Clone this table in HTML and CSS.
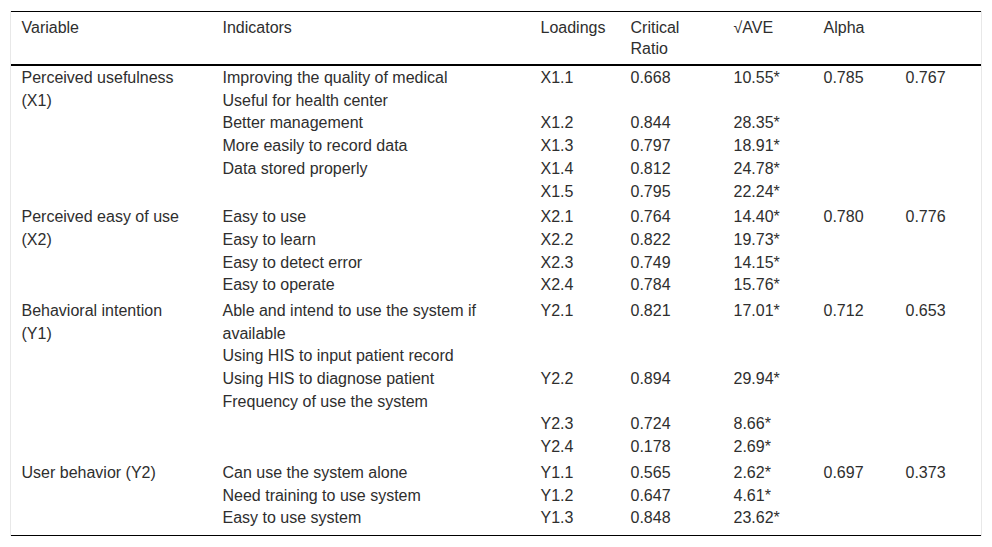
FILE: index.html
```html
<!DOCTYPE html>
<html lang="en">
<head>
<meta charset="utf-8">
<title>Table</title>
<link rel="stylesheet" href="styles.css">
</head>
<body>
<div class="wrap">
<table class="tbl">
  <colgroup>
    <col class="c1"><col class="c2"><col class="c3"><col class="c4"><col class="c5"><col class="c6"><col class="c7">
  </colgroup>
  <thead>
    <tr>
      <th>Variable</th>
      <th>Indicators</th>
      <th>Loadings</th>
      <th>Critical Ratio</th>
      <th>√AVE</th>
      <th>Alpha</th>
      <th></th>
    </tr>
  </thead>
  <tbody>
    <tr>
      <td class="var">Perceived usefulness (X1)</td>
      <td><div class="ln">Improving the quality of medical</div><div class="ln">Useful for health center</div><div class="ln">Better management</div><div class="ln">More easily to record data</div><div class="ln">Data stored properly</div></td>
      <td><div class="ln">X1.1</div><div class="ln"></div><div class="ln">X1.2</div><div class="ln">X1.3</div><div class="ln">X1.4</div><div class="ln">X1.5</div></td>
      <td><div class="ln">0.668</div><div class="ln"></div><div class="ln">0.844</div><div class="ln">0.797</div><div class="ln">0.812</div><div class="ln">0.795</div></td>
      <td><div class="ln">10.55*</div><div class="ln"></div><div class="ln">28.35*</div><div class="ln">18.91*</div><div class="ln">24.78*</div><div class="ln">22.24*</div></td>
      <td>0.785</td>
      <td>0.767</td>
    </tr>
    <tr>
      <td class="var">Perceived easy of use (X2)</td>
      <td><div class="ln">Easy to use</div><div class="ln">Easy to learn</div><div class="ln">Easy to detect error</div><div class="ln">Easy to operate</div></td>
      <td><div class="ln">X2.1</div><div class="ln">X2.2</div><div class="ln">X2.3</div><div class="ln">X2.4</div></td>
      <td><div class="ln">0.764</div><div class="ln">0.822</div><div class="ln">0.749</div><div class="ln">0.784</div></td>
      <td><div class="ln">14.40*</div><div class="ln">19.73*</div><div class="ln">14.15*</div><div class="ln">15.76*</div></td>
      <td>0.780</td>
      <td>0.776</td>
    </tr>
    <tr>
      <td class="var">Behavioral intention (Y1)</td>
      <td><div class="ln">Able and intend to use the system if available</div><div class="ln">Using HIS to input patient record</div><div class="ln">Using HIS to diagnose patient</div><div class="ln">Frequency of use the system</div></td>
      <td><div class="ln">Y2.1</div><div class="ln"></div><div class="ln"></div><div class="ln">Y2.2</div><div class="ln"></div><div class="ln">Y2.3</div><div class="ln">Y2.4</div></td>
      <td><div class="ln">0.821</div><div class="ln"></div><div class="ln"></div><div class="ln">0.894</div><div class="ln"></div><div class="ln">0.724</div><div class="ln">0.178</div></td>
      <td><div class="ln">17.01*</div><div class="ln"></div><div class="ln"></div><div class="ln">29.94*</div><div class="ln"></div><div class="ln">8.66*</div><div class="ln">2.69*</div></td>
      <td>0.712</td>
      <td>0.653</td>
    </tr>
    <tr class="last">
      <td class="var">User behavior (Y2)</td>
      <td><div class="ln">Can use the system alone</div><div class="ln">Need training to use system</div><div class="ln">Easy to use system</div></td>
      <td><div class="ln">Y1.1</div><div class="ln">Y1.2</div><div class="ln">Y1.3</div></td>
      <td><div class="ln">0.565</div><div class="ln">0.647</div><div class="ln">0.848</div></td>
      <td><div class="ln">2.62*</div><div class="ln">4.61*</div><div class="ln">23.62*</div></td>
      <td>0.697</td>
      <td>0.373</td>
    </tr>
  </tbody>
</table>
</div>
</body>
</html>
```
FILE: styles.css
```css
html, body {
  margin: 0;
  padding: 0;
  background: #fff;
}
body {
  padding: 11px 10px 0 10px;
  font-family: "Liberation Sans", Arial, sans-serif;
  color: #2e2e2e;
}
.wrap {
  width: 970px;
  border-left: 1px solid #e8e8e8;
  border-right: 1px solid #e8e8e8;
}
.tbl {
  width: 970px;
  table-layout: fixed;
  border-collapse: collapse;
  font-size: 16px;
}
.c1 { width: 201px; }
.c2 { width: 318px; }
.c3 { width: 90px; }
.c4 { width: 103px; }
.c5 { width: 90px; }
.c6 { width: 82px; }
.c7 { width: 86px; }
.tbl thead tr {
  border-top: 1px solid #000;
  border-bottom: 2px solid #000;
}
.tbl th {
  font-weight: normal;
  text-align: left;
  vertical-align: top;
  line-height: 21px;
  padding: 5px 10px 5px 10.5px;
}
.tbl td {
  vertical-align: top;
  text-align: left;
  line-height: 22.7px;
  padding: 1px 10px 2px 10.5px;
}
.tbl td.var {
  padding-right: 30px;
}
.ln {
  min-height: 22.7px;
}
.tbl tr.last td {
  padding-bottom: 5px;
}
.tbl tbody tr.last {
  border-bottom: 1px solid #000;
}
```
